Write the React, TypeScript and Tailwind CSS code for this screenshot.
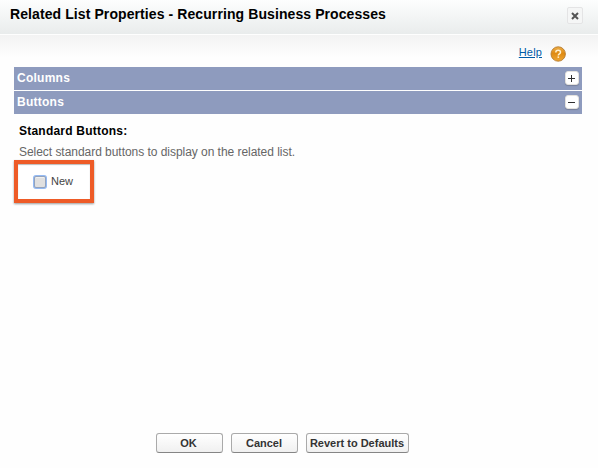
import { useState } from "react";

function HelpIcon() {
  return (
    <svg width="16" height="16" viewBox="0 0 16 16" aria-hidden="true">
      <defs>
        <linearGradient id="amber" x1="0" y1="0" x2="0" y2="1">
          <stop offset="0" stopColor="#efb04a" />
          <stop offset="0.45" stopColor="#df8a12" />
          <stop offset="1" stopColor="#efa632" />
        </linearGradient>
      </defs>
      <circle cx="8.2" cy="8" r="7.2" fill="url(#amber)" stroke="#b5792a" strokeWidth="0.9" />
      <path d="M5.8 6.4C5.8 4.9 6.8 4.2 8.2 4.2s2.3.8 2.3 2c0 1.6-2.2 1.6-2.2 3.2" fill="none" stroke="#fff0cf" strokeWidth="1.5" />
      <path d="M7.5 10.4h1.6v1.5H7.5z" fill="#fff0cf" />
    </svg>
  );
}

function SectionBar({ title, open, onToggle }: { title: string; open: boolean; onToggle: () => void }) {
  return (
    <div className="flex h-[23px] items-start justify-between bg-[#8e9bbe] pr-[3px] pl-[3px]">
      <span className="mt-[3px] text-[12px] leading-4 font-bold tracking-[0.25px] text-white">{title}</span>
      <button
        onClick={onToggle}
        aria-label={title}
        className="mt-[4px] flex h-[14px] w-[14px] items-center justify-center rounded-[3px] border border-[#e4e2de] bg-white shadow-[0_1px_1px_#77809a]"
      >
        <svg width="8" height="8" viewBox="0 0 8 8" stroke="#303030" strokeWidth="1">
          <path d={open ? "M0 4.5h7" : "M0 4.5h7M3.5 1v7"} />
        </svg>
      </button>
    </div>
  );
}

const buttonStyle =
  "h-5 rounded-[3px] border border-[#aaa] border-b-[#858585] bg-linear-to-b from-white to-[#f0f0f0] text-[11px] leading-[18px] font-bold whitespace-nowrap text-[#333]";

export default function App() {
  const [columnsOpen, setColumnsOpen] = useState(false);
  const [buttonsOpen, setButtonsOpen] = useState(true);

  return (
    <div className="flex h-[468px] w-[598px] flex-col overflow-hidden bg-[#fefefe] font-['Liberation_Sans',Arial,sans-serif]">
      <header className="flex h-[34px] shrink-0 items-start justify-between bg-linear-to-b from-[#fdfefe] to-[#e9ecec] pr-[15px] pl-[10px]">
        <h1 className="mt-[6px] text-[14px] leading-4 font-bold tracking-[0.09px] text-black">
          Related List Properties - Recurring Business Processes
        </h1>
        <button aria-label="Close" className="mt-[7px] flex h-[17px] w-[16px] items-center justify-center rounded-[2px] border border-[#e4e4e5] bg-[#f5f6f6]">
          <svg width="8" height="8" viewBox="0 0 8 8" stroke="#555" strokeWidth="2">
            <path d="M1 1l6 6M7 1L1 7" />
          </svg>
        </button>
      </header>
      <main className="mt-px flex h-[395px] shrink-0 flex-col bg-linear-to-b from-[#f3f3f3] to-[#fefefe] to-[22px] pr-[16px] pl-[14px]">
        <div className="flex h-[32px] shrink-0 items-start justify-end gap-[8px] pr-[16px]">
          <a href="#help" className="mt-[10px] text-[11px] leading-[15px] tracking-[0.15px] text-[#015ba7] underline">Help</a>
          <span className="mt-[11px]"><HelpIcon /></span>
        </div>
        <div className="flex flex-col gap-px">
          <SectionBar title="Columns" open={columnsOpen} onToggle={() => setColumnsOpen(!columnsOpen)} />
          <SectionBar title="Buttons" open={buttonsOpen} onToggle={() => setButtonsOpen(!buttonsOpen)} />
        </div>
        <h2 className="mt-[9px] ml-[5px] text-[12px] leading-4 font-bold tracking-[0.22px] text-black">Standard Buttons:</h2>
        <p className="mt-[5px] ml-[5px] text-[12px] leading-4 tracking-[-0.04px] text-[#666]">
          Select standard buttons to display on the related list.
        </p>
        <label className="flex h-[43px] w-[80px] items-start border-4 border-[#ee5b27] bg-white pl-[15px] text-[11px] leading-4 text-[#444] shadow-[0_1px_2px_#999,inset_0_1px_1px_#bbb]">
          <input
            type="checkbox"
            className="mt-[12px] mr-px ml-px h-[12px] w-[12px] appearance-none rounded-[2px] border border-[#93a3bd] bg-[#e0e0e0] shadow-[0_0_0_1px_#94baf3,inset_0_1px_0_#f0f0f0] checked:bg-[#83aef0]"
          />
          <span className="mt-[9px] ml-1">New</span>
        </label>
      </main>
      <footer className="mt-[3px] flex gap-[8px] pl-[156px]">
        <button className={`${buttonStyle} w-[67px] pr-[2px]`}>OK</button>
        <button className={`${buttonStyle} w-[67px] pr-[1px]`}>Cancel</button>
        <button className={`${buttonStyle} w-[103px] pr-[1px]`}>Revert to Defaults</button>
      </footer>
    </div>
  );
}
